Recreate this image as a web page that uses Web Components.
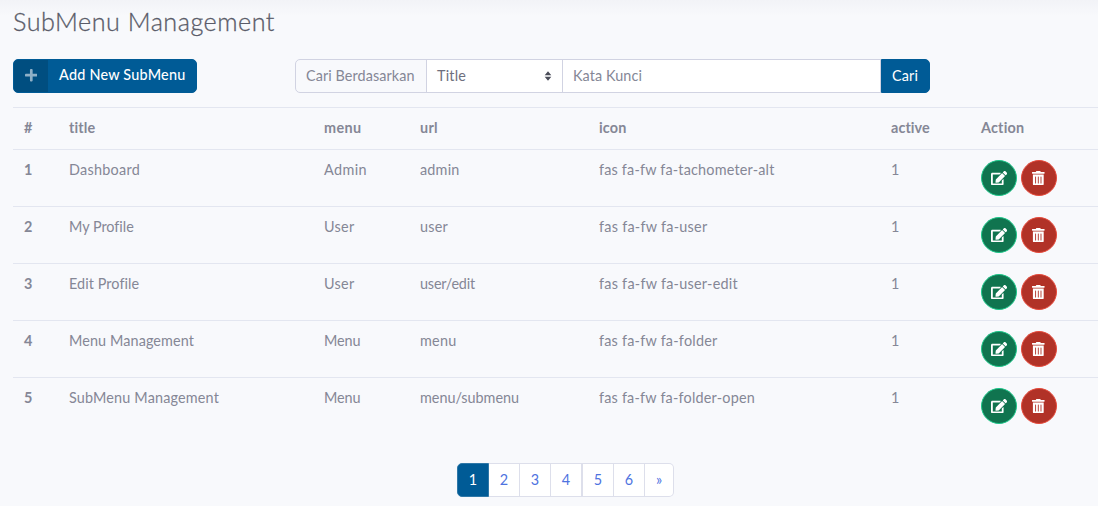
<!DOCTYPE html>
<html lang="id">
<head>
<meta charset="utf-8">
<title>SubMenu Management</title>
<style>
html,body{margin:0;height:100%;overflow:hidden}
body{background:#f8f9fc;font:14.4px/21px Lato,"Noto Sans",sans-serif;color:#858796}
</style>
</head>
<body>
<submenu-page></submenu-page>
<script>
/* Text label with an optional advance width, reached by adjusting the tracking. */
customElements.define('fit-text', class extends HTMLElement {
  connectedCallback() {
    if (this.shadowRoot) return;
    const root = this.attachShadow({mode: 'open'});
    root.innerHTML = '<style>:host{display:inline-block;white-space:nowrap}span{display:inline-block}</style><span><slot></slot></span>';
    const span = root.querySelector('span'), want = +this.getAttribute('w');
    requestAnimationFrame(() => {
      if (!want) return;
      const n = this.textContent.length;
      span.style.letterSpacing = (want - .5 - span.getBoundingClientRect().width) / n + 'px';
    });
  }
});

const ICONS = {
  plus: [448, 'M416 208H272V64c0-17.67-14.33-32-32-32h-32c-17.67 0-32 14.33-32 32v144H32c-17.67 0-32 14.33-32 32v32c0 17.67 14.33 32 32 32h144v144c0 17.67 14.33 32 32 32h32c17.67 0 32-14.33 32-32V304h144c17.67 0 32-14.33 32-32v-32c0-17.67-14.33-32-32-32z'],
  edit: [576, 'M402.6 83.2l90.2 90.2c3.8 3.8 3.8 10 0 13.8L274.4 405.6l-92.8 10.3c-12.4 1.4-22.9-9.1-21.5-21.5l10.3-92.8L388.8 83.2c3.8-3.8 10-3.8 13.8 0zm162-22.9l-48.8-48.8c-15.2-15.2-39.9-15.2-55.2 0l-35.4 35.4c-3.8 3.8-3.8 10 0 13.8l90.2 90.2c3.8 3.8 10 3.8 13.8 0l35.4-35.4c15.2-15.3 15.2-40 0-55.2zM384 346.2V448H64V128h229.8c3.2 0 6.2-1.3 8.5-3.5l40-40c7.6-7.6 2.2-20.5-8.5-20.5H48C21.5 64 0 85.5 0 112v352c0 26.5 21.5 48 48 48h352c26.5 0 48-21.5 48-48V306.2c0-10.7-12.9-16-20.5-8.5l-40 40c-2.2 2.3-3.5 5.3-3.5 8.5z'],
  trash: [448, 'M32 464a48 48 0 0 0 48 48h288a48 48 0 0 0 48-48V128H32zm272-256a16 16 0 0 1 32 0v224a16 16 0 0 1-32 0zm-96 0a16 16 0 0 1 32 0v224a16 16 0 0 1-32 0zm-96 0a16 16 0 0 1 32 0v224a16 16 0 0 1-32 0zM432 32H312l-9.4-18.7A24 24 0 0 0 281.1 0H166.8a23.72 23.72 0 0 0-21.4 13.3L136 32H16A16 16 0 0 0 0 48v32a16 16 0 0 0 16 16h416a16 16 0 0 0 16-16V48a16 16 0 0 0-16-16z']
};
customElements.define('ui-icon', class extends HTMLElement {
  connectedCallback() {
    if (this.shadowRoot) return;
    const [w, d] = ICONS[this.getAttribute('name')];
    this.attachShadow({mode: 'open'}).innerHTML =
      `<style>:host{display:inline-flex}svg{height:14.4px;width:${w / 512 * 14.4}px;display:block}</style>
       <svg viewBox="0 0 ${w} 512"><path fill="currentColor" d="${d}"/></svg>`;
  }
});

customElements.define('icon-button', class extends HTMLElement {
  connectedCallback() {
    if (this.shadowRoot) return;
    this.attachShadow({mode: 'open'}).innerHTML = `<style>
      :host{display:inline-flex}
      button{all:unset;box-sizing:border-box;width:36px;height:36px;border-radius:50%;display:flex;align-items:center;justify-content:center;color:#fff;background:#10744f;border:1px solid #1cc88a}
      :host([kind=trash]) button{background:#b13227;border-color:#e74a3b;padding-right:1px}
      </style><button><ui-icon name="${this.getAttribute('kind')}"></ui-icon></button>`;
  }
});

customElements.define('split-button', class extends HTMLElement {
  connectedCallback() {
    if (this.shadowRoot) return;
    this.attachShadow({mode: 'open'}).innerHTML = `<style>
      :host{display:flex;box-sizing:border-box;width:184px;height:34px;border:1px solid #005b96;border-radius:5px;background:#005b96;color:#fff;overflow:hidden;font-weight:500}
      .i{width:34px;background:#004e80;display:flex;align-items:center;justify-content:center;color:#8fb0c7;padding-bottom:2px}
      .t{padding:4px 0 0 11px}
      </style><span class="i"><ui-icon name="plus"></ui-icon></span><span class="t"><slot></slot></span>`;
  }
});

customElements.define('search-bar', class extends HTMLElement {
  connectedCallback() {
    if (this.shadowRoot) return;
    this.attachShadow({mode: 'open'}).innerHTML = `<style>
      :host{display:flex;width:635px;height:34px}
      div{box-sizing:border-box;border:1px solid #d1d3e2;padding:5px 10px 0;line-height:21px}
      .l{width:132px;border-radius:5px 0 0 5px}
      .s{width:137px;margin-left:-1px;background:#fff;color:#6e707e;display:flex;justify-content:space-between}
      .s svg{width:8px;height:10px;margin-top:6px}
      .k{flex:1;margin-left:-1px;background:#fff}
      .b{width:49px;background:#005b96;border-color:#005b96;color:#fff;border-radius:0 5px 5px 0}
      </style>
      <div class="l"><fit-text w="109">Cari Berdasarkan</fit-text></div>
      <div class="s"><fit-text w="29.5">Title</fit-text><svg viewBox="0 0 8 10"><path fill="#4a4c58" d="M4 .3 7.3 4.2H.7zM4 9.7.7 5.8h6.6z"/></svg></div>
      <div class="k"><fit-text w="69.5">Kata Kunci</fit-text></div>
      <div class="b"><fit-text w="26.5">Cari</fit-text></div>`;
  }
});

const ROWS = [
  [['Dashboard', 71.5], ['Admin', 43.5], ['admin', 40], ['fas fa-fw fa-tachometer-alt', 176]],
  [['My Profile', 65], ['User', 31], ['user', 28.5], ['fas fa-fw fa-user', 109]],
  [['Edit Profile', 70.5], ['User', 31], ['user/edit', 55.5], ['fas fa-fw fa-user-edit', 139.5]],
  [['Menu Management', 125.5], ['Menu', 37], ['menu', 37], ['fas fa-fw fa-folder', 119]],
  [['SubMenu Management', 150.5], ['Menu', 37], ['menu/submenu', 99.5], ['fas fa-fw fa-folder-open', 156.5]]
];
customElements.define('submenu-table', class extends HTMLElement {
  connectedCallback() {
    if (this.shadowRoot) return;
    const cell = ([t, w]) => `<span><fit-text w="${w}">${t}</fit-text></span>`;
    const head = [['#', 9], ['title', 27], ['menu', 38], ['url', 18.5], ['icon', 28], ['active', 39.5], ['Action', 44]];
    this.attachShadow({mode: 'open'}).innerHTML = `<style>
      :host{display:block}
      .r{display:grid;grid-template-columns:45px 255px 96px 179px 292px 90px 1fr;box-sizing:border-box;height:57px;padding:9px 0 0 11px;border-top:1px solid #e3e6f0}
      .h{height:42px;font-weight:700}
      b{font-weight:700}
      .a{display:flex;gap:4px;padding-top:1px}
      </style><div class="r h">${head.map(cell).join('')}</div>` +
      ROWS.map((r, i) => `<div class="r"><b>${i + 1}</b>${r.map(cell).join('')}<span>1</span><span class="a"><icon-button kind="edit"></icon-button><icon-button kind="trash"></icon-button></span></div>`).join('');
  }
});

customElements.define('page-nav', class extends HTMLElement {
  connectedCallback() {
    if (this.shadowRoot) return;
    const cells = [['1', 32], ['2', 31], ['3', 31], ['4', 32], ['5', 31], ['6', 31], ['»', 29]];
    this.attachShadow({mode: 'open'}).innerHTML = `<style>
      :host{display:flex;height:34px}
      a{box-sizing:border-box;border:1px solid #dddfeb;border-left-width:0;background:#fff;color:#4e73df;text-align:center;padding-top:5px}
      a:first-of-type{background:#005b96;color:#fff;border:1px solid #2f78a8;border-radius:5px 0 0 5px}
      a:last-of-type{border-radius:0 5px 5px 0}
      a:nth-of-type(4){border-right-width:2px}
      </style>` + cells.map(([t, w]) => `<a style="width:${w}px">${t}</a>`).join('');
  }
});

customElements.define('submenu-page', class extends HTMLElement {
  connectedCallback() {
    if (this.shadowRoot) return;
    this.attachShadow({mode: 'open'}).innerHTML = `<style>
      :host{display:block;box-sizing:border-box;height:506px;padding:6px 0 0 13px;background:linear-gradient(#f2f3f7,#f8f9fc 16px)}
      h1{margin:0;font-size:25.2px;line-height:30px;height:53px;font-weight:300;color:#5a5c69;-webkit-text-stroke:.3px #5a5c69}
      .bar{display:flex;gap:98px;height:48px}
      page-nav{margin:29px 0 0 444px}
      </style>
      <h1><fit-text w="262.5">SubMenu Management</fit-text></h1>
      <div class="bar"><split-button><fit-text w="127">Add New SubMenu</fit-text></split-button><search-bar></search-bar></div>
      <submenu-table></submenu-table>
      <page-nav></page-nav>`;
  }
});
</script>
</body>
</html>
